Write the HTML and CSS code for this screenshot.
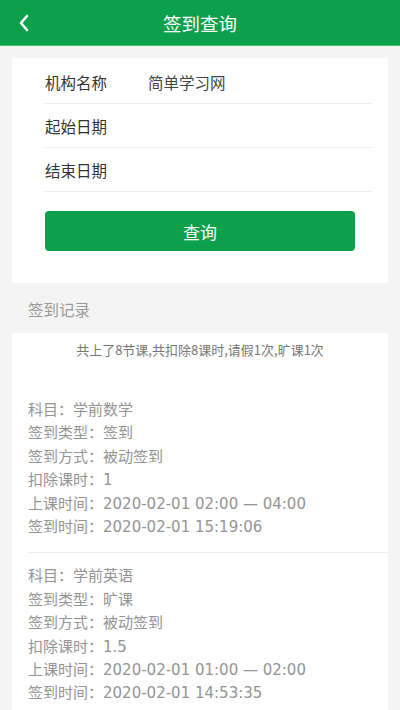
FILE: index.html
```html
<!DOCTYPE html>
<html lang="zh-CN">
<head>
  <meta charset="UTF-8" />
  <title>签到查询</title>
  <meta name="viewport" content="width=device-width, initial-scale=1.0" />
  <link rel="stylesheet" href="styles.css">
</head>
<body>
  <div class="header">
    <svg class="back" width="12" height="18" viewBox="0 0 12 18">
      <polyline points="9,2 3,9 9,16" fill="none" stroke="#fff" stroke-width="2.6" stroke-linecap="round" stroke-linejoin="round" />
    </svg>
    <h1>签到查询</h1>
  </div>

  <div class="card form">
    <div class="row">
      <span class="label">机构名称</span>
      <span class="value">简单学习网</span>
    </div>
    <div class="row">
      <span class="label">起始日期</span>
    </div>
    <div class="row">
      <span class="label">结束日期</span>
    </div>
    <button class="search">查询</button>
  </div>

  <div class="section-title">签到记录</div>

  <div class="card records">
    <div class="summary">共上了8节课,共扣除8课时,请假1次,旷课1次</div>
    <div class="record">
      <p>科目：学前数学</p>
      <p>签到类型：签到</p>
      <p>签到方式：被动签到</p>
      <p>扣除课时：1</p>
      <p>上课时间：2020-02-01 02:00 — 04:00</p>
      <p>签到时间：2020-02-01 15:19:06</p>
    </div>
    <div class="record">
      <p>科目：学前英语</p>
      <p>签到类型：旷课</p>
      <p>签到方式：被动签到</p>
      <p>扣除课时：1.5</p>
      <p>上课时间：2020-02-01 01:00 — 02:00</p>
      <p>签到时间：2020-02-01 14:53:35</p>
    </div>
  </div>
</body>
</html>
```

FILE: styles.css
```css
body {
  margin: 0;
  font-family: "Noto Sans CJK SC", "Noto Sans", sans-serif;
  background: #f4f4f4;
  color: #333;
}
.header {
  height: 46px;
  background: #0da04b;
  display: flex;
  align-items: center;
  justify-content: center;
  position: relative;
  border-bottom: 1px solid #4cc07a;
  box-sizing: border-box;
}
.header h1 {
  margin: 0;
  font-size: 18.5px;
  font-weight: 400;
  color: #fff;
}
.back {
  position: absolute;
  left: 18px;
  top: 14px;
}
.card {
  background: #fff;
  margin: 0 12px;
}
.form {
  margin-top: 12px;
  padding: 2px 16px 32px 33px;
}
.row {
  height: 43px;
  display: flex;
  align-items: center;
  border-bottom: 1px solid #ececec;
  font-size: 15.5px;
}
.label {
  width: 103px;
  color: #333;
}
.value {
  color: #444;
}
.search {
  display: block;
  width: 310px;
  height: 40px;
  margin-top: 19px;
  border: none;
  border-radius: 4px;
  background: #0da04b;
  color: #fff;
  font-family: inherit;
  font-size: 17px;
}
.section-title {
  height: 50px;
  line-height: 52px;
  padding-left: 28px;
  font-size: 15.5px;
  color: #999;
}
.records {
  padding-top: 6px;
}
.summary {
  text-align: center;
  font-size: 13px;
  color: #777;
  line-height: 22px;
  height: 48px;
}
.record {
  margin-left: 16px;
  padding: 12px 0 13px;
  border-bottom: 1px solid #ededed;
}
.record p {
  margin: 0;
  font-family: "DejaVu Sans", "Noto Sans CJK SC", sans-serif;
  font-size: 15px;
  line-height: 23.4px;
  color: #949494;
}
```
